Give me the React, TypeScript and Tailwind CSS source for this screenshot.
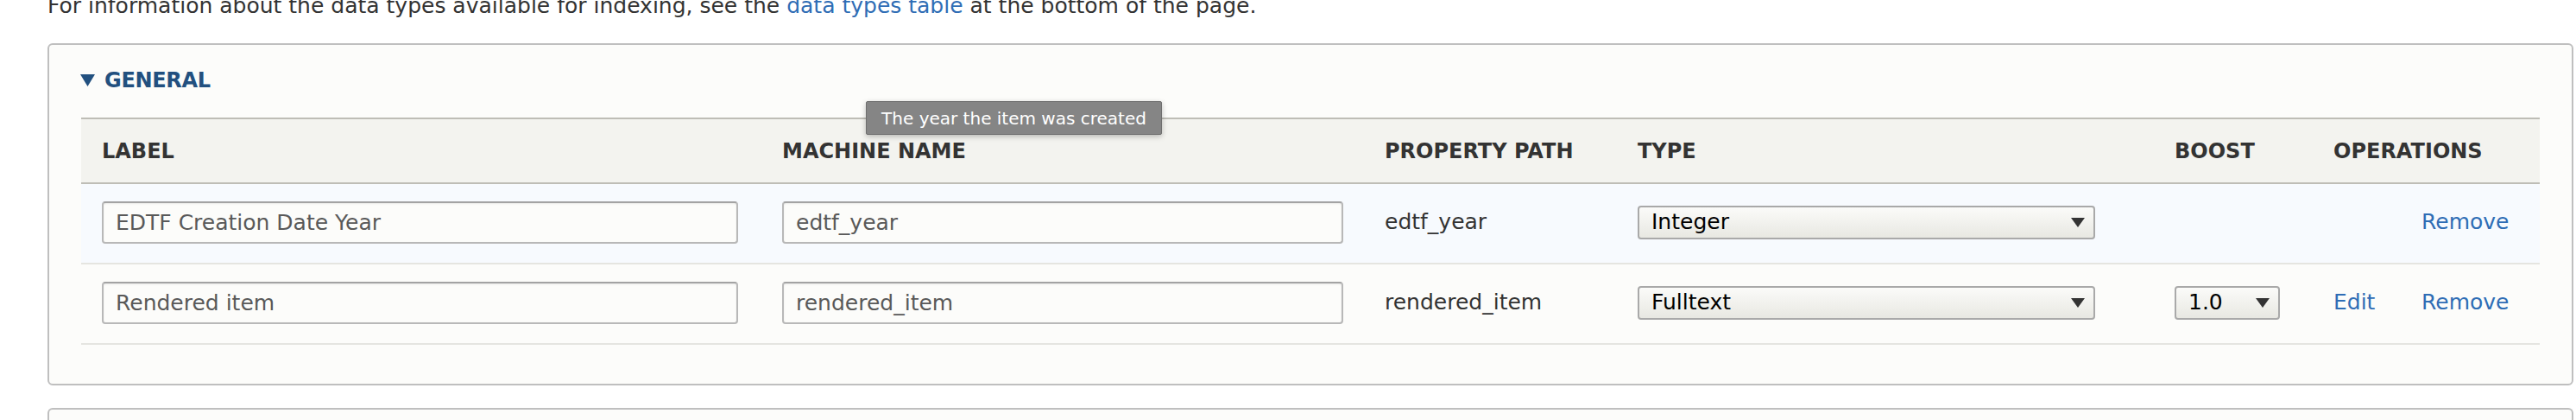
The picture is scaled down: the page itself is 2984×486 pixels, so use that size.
import React from 'react';

interface FieldRow {
  label: string;
  machine: string;
  path: string;
  type: string;
  boost?: string;
  editable: boolean;
  highlight: boolean;
}

const rows: FieldRow[] = [
  {
    label: 'EDTF Creation Date Year',
    machine: 'edtf_year',
    path: 'edtf_year',
    type: 'Integer',
    editable: false,
    highlight: true,
  },
  {
    label: 'Rendered item',
    machine: 'rendered_item',
    path: 'rendered_item',
    type: 'Fulltext',
    boost: '1.0',
    editable: true,
    highlight: false,
  },
];

function Arrow({ className }: { className?: string }) {
  return (
    <svg className={className} viewBox="0 0 16 11" width="16" height="11" aria-hidden>
      <polygon points="0,0 16,0 8,11" fill="currentColor" />
    </svg>
  );
}

function FakeSelect({ value, width }: { value: string; width: string }) {
  return (
    <div
      className={`${width} flex h-[39px] items-center justify-between rounded-[4px] border-2 border-[#a9a9a9] bg-gradient-to-b from-[#fbfbf9] to-[#e8e8e2] pl-[14px] pr-[10px] text-[25px] text-black`}
    >
      <span>{value}</span>
      <Arrow className="text-[#333]" />
    </div>
  );
}

function TextInput({ value, width }: { value: string; width: string }) {
  return (
    <input
      readOnly
      value={value}
      className={`${width} h-[49px] rounded-[4px] border-2 border-[#b8b8b8] border-t-[#a3a3a3] bg-[#fcfcfa] px-[14px] text-[25px] text-[#595959] shadow-[inset_0_1px_2px_rgba(0,0,0,0.08)] outline-none`}
    />
  );
}

export default function App() {
  return (
    <div className="relative flex min-h-screen flex-col bg-white pl-[55px] pr-[3px] font-['DejaVu_Sans',sans-serif] text-[#333]">
      <p className="-mt-[13px] whitespace-nowrap text-[25px] leading-[39px]">
        For information about the data types available for indexing, see the{' '}
        <a href="#" className="text-[#2f6db5]">
          data types table
        </a>{' '}
        at the bottom of the page.
      </p>

      {/* General fieldset */}
      <section className="mt-[24px] rounded-[6px] border-2 border-[#bfbfbf] bg-[#fcfcfa] px-[37px] pb-[45px]">
        <div className="-ml-px flex h-[84px] items-center gap-[11px] pb-[3px] text-[#22507f]">
          <svg viewBox="0 0 17 14" width="17" height="14" aria-hidden>
            <polygon points="0,0 17,0 8.5,14" fill="currentColor" />
          </svg>
          <span className="text-[24px] font-bold tracking-[-0.3px]">GENERAL</span>
        </div>

        <div className="flex h-[77px] items-center border-y-2 border-[#bebdb6] bg-[#f3f3ef] text-[24px] font-bold text-[#333]">
          <div className="w-[788px] shrink-0 pl-6">LABEL</div>
          <div className="w-[698px] shrink-0 pl-6">MACHINE NAME</div>
          <div className="w-[293px] shrink-0 pl-6">PROPERTY PATH</div>
          <div className="w-[622px] shrink-0 pl-6">TYPE</div>
          <div className="w-[184px] shrink-0 pl-6">BOOST</div>
          <div className="w-[263px] shrink-0 pl-6">OPERATIONS</div>
        </div>

        {rows.map((row) => (
          <div
            key={row.machine}
            className={`flex h-[93px] items-center border-b-2 border-[#e5e5e0] pb-[3px] text-[25px] ${
              row.highlight ? 'bg-[#f7fafe]' : 'bg-[#fcfcfa]'
            }`}
          >
            <div className="w-[788px] shrink-0 pl-6">
              <TextInput value={row.label} width="w-[737px]" />
            </div>
            <div className="w-[698px] shrink-0 pl-6">
              <TextInput value={row.machine} width="w-[650px]" />
            </div>
            <div className="w-[293px] shrink-0 pl-6">{row.path}</div>
            <div className="w-[622px] shrink-0 pl-6">
              <FakeSelect value={row.type} width="w-[530px]" />
            </div>
            <div className="w-[184px] shrink-0 pl-6">
              {row.boost && <FakeSelect value={row.boost} width="w-[122px]" />}
            </div>
            <div className="w-[102px] shrink-0 pl-6">
              {row.editable && (
                <a href="#" className="text-[#2f6db5]">
                  Edit
                </a>
              )}
            </div>
            <div className="w-[161px] shrink-0 pl-6">
              <a href="#" className="text-[#2f6db5]">
                Remove
              </a>
            </div>
          </div>
        ))}
      </section>

      {/* next fieldset, cut off by the frame */}
      <section className="mt-[26px] h-[14px] rounded-t-[6px] border-2 border-b-0 border-[#bfbfbf] bg-[#fcfcfa]" />

      {/* tooltip */}
      <div className="absolute left-[1003px] top-[117px] flex h-[39px] w-[343px] items-center justify-center rounded-[2px] border border-[#6e6e6e] bg-[#858585] text-[20px] text-white shadow-[0_2px_6px_rgba(0,0,0,0.25)]">
        The year the item was created
      </div>
    </div>
  );
}
